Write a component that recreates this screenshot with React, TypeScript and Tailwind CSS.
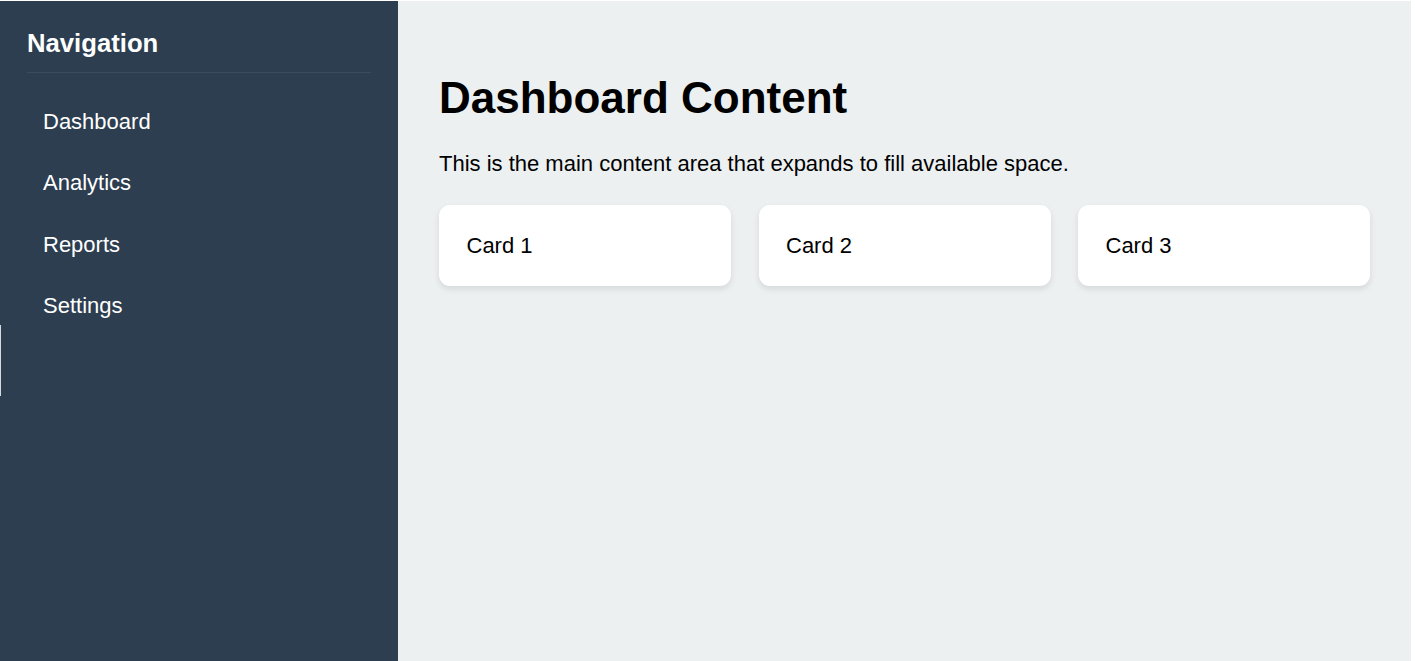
const navItems = ['Dashboard', 'Analytics', 'Reports', 'Settings']
const cards = ['Card 1', 'Card 2', 'Card 3']

export default function App() {
  return (
    <div
      className="bg-white pt-px pr-[4px] w-[1415px] h-[661px]"
      style={{ fontFamily: '"Liberation Sans", Arial, sans-serif' }}
    >
      <div className="relative flex h-[660px]">
        <aside className="w-[398px] shrink-0 bg-[#2c3e50] text-white px-[27px] pt-[28px]">
          <h3 className="text-[25.7px] font-bold leading-[29.6px] pb-[13px] border-b border-[#3a4b5d]">
            Navigation
          </h3>
          <ul className="mt-[18px]">
            {navItems.map((item) => (
              <li key={item} className="px-[16px] py-[18.1px] text-[22px] leading-[25.4px]">
                {item}
              </li>
            ))}
          </ul>
        </aside>

        <main className="flex-1 bg-[#ecf0f1] px-[41px] pt-[41px] text-black">
          <h1 className="mt-[30px] text-[44px] font-bold leading-[51px]">Dashboard Content</h1>
          <p className="mt-[28px] text-[22px] leading-[25.3px]">
            This is the main content area that expands to fill available space.
          </p>
          <div className="mt-[29px] grid grid-cols-3 gap-[27.5px]">
            {cards.map((c) => (
              <div
                key={c}
                className="bg-white rounded-[11px] p-[27.5px] text-[22px] leading-[25.3px] shadow-[0_3px_6px_rgba(0,0,0,0.1)]"
              >
                {c}
              </div>
            ))}
          </div>
        </main>

        {/* thin handle on the left edge */}
        <div className="absolute left-0 top-[324px] h-[71px] w-px bg-[#d5dade]" />
      </div>
    </div>
  )
}
